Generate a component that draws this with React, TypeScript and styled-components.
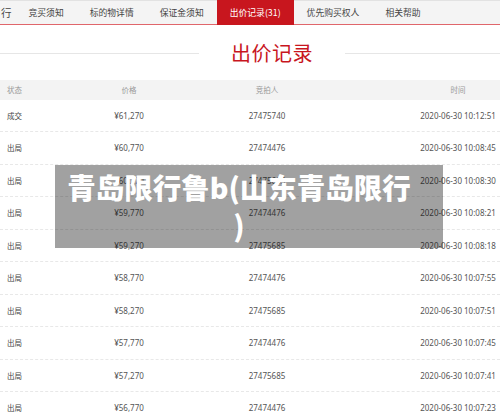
import React from "react";
import styled, { createGlobalStyle } from "styled-components";

const RED = "#c8161e";

const GlobalStyle = createGlobalStyle`
  html, body {
    margin: 0;
    padding: 0;
    background: #fff;
    overflow: hidden;
  }
  body {
    font-family: "Noto Sans", "Noto Sans CJK SC", sans-serif;
  }
`;

const Page = styled.div`
  position: relative;
  width: 500px;
  height: 415px;
  overflow: hidden;
`;

const TabBar = styled.div`
  display: flex;
  height: 25px;
  background: #f4f4f4;
  border-top: 1px solid #e2e2e2;
  border-bottom: 1px solid #e0666b;
  box-sizing: border-box;
`;

const Tab = styled.div<{ $active?: boolean; $clipped?: boolean }>`
  display: flex;
  align-items: center;
  padding: ${({ $clipped }) => ($clipped ? "0 4px 0 1px" : "0 13px")};
  margin-top: -1px;
  height: 25px;
  font-family: "Noto Sans CJK SC", sans-serif;
  font-size: ${({ $clipped }) => ($clipped ? "10.5px" : "8.8px")};
  white-space: nowrap;
  color: ${({ $active }) => ($active ? "#fff" : "#444")};
  background: ${({ $active }) => ($active ? RED : "transparent")};
`;

const TitleRow = styled.div`
  display: grid;
  grid-template-columns: 199px 1fr 155px;
  align-items: center;
  height: 55px;
`;

const Rule = styled.div`
  height: 1px;
  background: #e6e6e6;
  margin-top: 2px;
`;

const Title = styled.h2`
  margin: 0;
  text-align: center;
  font-family: "Noto Sans CJK SC", sans-serif;
  font-weight: 400;
  font-size: 20px;
  letter-spacing: 0.5px;
  color: ${RED};
`;

const Row = styled.div<{ $head?: boolean }>`
  display: grid;
  grid-template-columns: 60px 138px 138px 1fr;
  align-items: center;
  height: ${({ $head }) => ($head ? "19.5px" : "32.5px")};
  box-sizing: border-box;
  background: ${({ $head }) => ($head ? "#f3f3f3" : "#fff")};
  border-bottom: ${({ $head }) => ($head ? "none" : "1px dashed #e8e8e8")};
  font-size: 8px;
  color: ${({ $head }) => ($head ? "#9a9a9a" : "#555")};
`;

const Status = styled.div<{ $dark?: boolean }>`
  padding-left: 7px;
  font-family: "Noto Sans CJK SC", sans-serif;
  font-size: 7.5px;
  color: ${({ $dark }) => ($dark ? "#444" : "inherit")};
`;

const Cell = styled.div<{ $cjk?: boolean }>`
  text-align: center;
  font-family: ${({ $cjk }) =>
    $cjk ? `"Noto Sans CJK SC", sans-serif` : `"Noto Sans", "Noto Sans CJK SC", sans-serif`};
  font-size: ${({ $cjk }) => ($cjk ? "7.5px" : "8px")};
  white-space: nowrap;
`;

const TimeCell = styled(Cell)`
  justify-self: end;
  width: 84px;
`;

// translucent banner laid over the bid list
const Overlay = styled.div`
  position: absolute;
  left: 55px;
  top: 165px;
  width: 388px;
  height: 83px;
  box-sizing: border-box;
  padding: 3px 30px 0 10px;
  background: rgba(0, 0, 0, 0.37);
  color: #fff;
  text-align: center;
  font-family: "Noto Sans CJK SC", sans-serif;
  font-weight: 900;
  font-size: 28.5px;
  line-height: 38px;
  line-break: anywhere;
`;

const tabs = ["竞买须知", "标的物详情", "保证金须知", "出价记录(31)", "优先购买权人", "相关帮助"];

const bids = [
  ["成交", "¥61,270", "27475740", "2020-06-30 10:12:51"],
  ["出局", "¥60,770", "27474476", "2020-06-30 10:08:45"],
  ["出局", "¥60,270", "27475685", "2020-06-30 10:08:30"],
  ["出局", "¥59,770", "27474476", "2020-06-30 10:08:21"],
  ["出局", "¥59,270", "27475685", "2020-06-30 10:08:18"],
  ["出局", "¥58,770", "27474476", "2020-06-30 10:07:55"],
  ["出局", "¥58,270", "27475685", "2020-06-30 10:07:51"],
  ["出局", "¥57,770", "27474476", "2020-06-30 10:07:45"],
  ["出局", "¥57,270", "27475685", "2020-06-30 10:07:41"],
  ["出局", "¥56,770", "27474476", "2020-06-30 10:07:23"],
];

export default function App() {
  return (
    <Page>
      <GlobalStyle />
      <TabBar>
        <Tab $clipped>行</Tab>
        {tabs.map((t) => (
          <Tab key={t} $active={t.startsWith("出价")}>
            {t}
          </Tab>
        ))}
      </TabBar>

      <TitleRow>
        <Rule />
        <Title>出价记录</Title>
        <Rule />
      </TitleRow>

      <Row $head>
        <Status>状态</Status>
        <Cell $cjk>价格</Cell>
        <Cell $cjk>竞拍人</Cell>
        <TimeCell $cjk>时间</TimeCell>
      </Row>
      {bids.map(([status, price, bidder, time]) => (
        <Row key={time}>
          <Status $dark>{status}</Status>
          <Cell>{price}</Cell>
          <Cell>{bidder}</Cell>
          <TimeCell>{time}</TimeCell>
        </Row>
      ))}

      <Overlay>青岛限行鲁b(山东青岛限行)</Overlay>
    </Page>
  );
}
